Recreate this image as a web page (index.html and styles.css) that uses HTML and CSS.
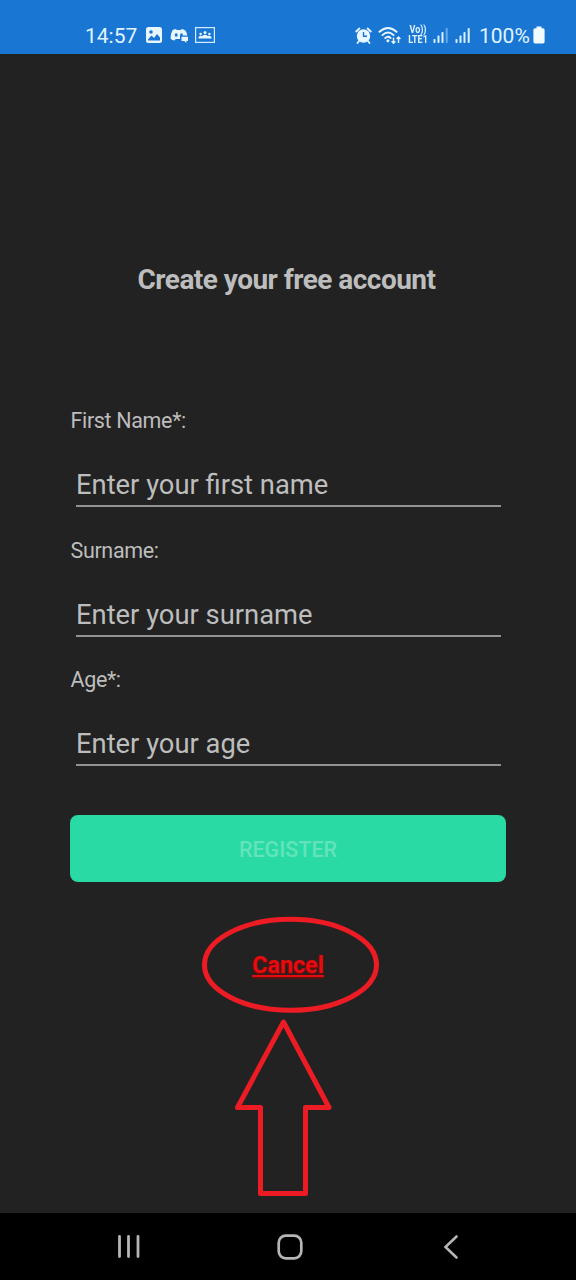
FILE: index.html
```html
<!DOCTYPE html>
<html lang="en">
<head>
<meta charset="utf-8">
<title>Create your free account</title>
<link rel="stylesheet" href="styles.css">
</head>
<body>
<div class="screen">
  <header class="status">
    <div class="status-left">
      <span class="clock">14:57</span>
      <svg class="photo" width="16" height="16" viewBox="0 0 16 16"><rect width="16" height="16" rx="2.5" fill="#e8f7ff"/><circle cx="5" cy="5" r="1.8" fill="#1976d2"/><path d="M2 12.5 5.5 8.5 8 11 11 7 14 10.5V13.5H2Z" fill="#1976d2"/></svg>
      <svg class="discord" width="19" height="16" viewBox="0 0 19 16"><path d="M6 2Q3.500 2.300 2.300 3.400Q.5 7 .5 11.500Q2 13.400 4.600 13.500L5.600 12H10V8.500H17.200Q16.900 5.500 15.400 3.400Q13.700 2.300 11.600 2L11 3H6.600Z" fill="#e8f7ff"/><ellipse cx="6.200" cy="8" rx="1.500" ry="1.700" fill="#1976d2"/><ellipse cx="11.500" cy="7.700" rx="1.400" ry="1.500" fill="#1976d2"/><path d="M11.500 9.800H18V14H16.300V16L14.300 14H11.500Z" fill="#e8f7ff"/></svg>
      <svg class="group" width="20" height="16" viewBox="0 0 20 16"><rect x=".6" y=".6" width="18.800" height="14.800" fill="none" stroke="#d3efff" stroke-width="1.200"/><g fill="#e8f7ff"><circle cx="10" cy="5.600" r="1.500"/><circle cx="5.600" cy="7" r="1.200"/><circle cx="14.400" cy="7" r="1.200"/><path d="M3.500 11.500V10Q5.500 8 7.300 9Q10 6.600 12.700 9Q14.500 8 16.500 10V11.500Z"/></g></svg>
    </div>
    <div class="status-right">
      <svg class="alarm" width="17" height="17" viewBox="0 0 17 17"><circle cx="8.500" cy="9" r="6.700" fill="#e8f7ff"/><path d="M1.200 4.500 4.400 1.500M15.800 4.500 12.600 1.500M4 14 2.500 16M13 14 14.500 16" stroke="#e8f7ff" stroke-width="1.800" stroke-linecap="round"/><path d="M8.500 5V9.300H12" fill="none" stroke="#1976d2" stroke-width="1.400"/></svg>
      <svg class="wifi" width="24" height="19" viewBox="0 0 24 19"><g fill="none" stroke="#e8f7ff" stroke-width="1.900" stroke-linecap="round"><path d="M1.500 5.800Q10 -1.800 18.500 5.800"/><path d="M4.400 9.100Q10 4 15.600 9.100"/><path d="M7.200 12.100Q10 9.600 12.600 12"/></g><circle cx="9.900" cy="14.700" r="1.500" fill="#e8f7ff"/><path d="M15.500 11.500V17M13.600 15.200 15.500 17.200 17.400 15.200M20.500 17V11M18.600 13 20.500 11 22.400 13" fill="none" stroke="#e8f7ff" stroke-width="1.400"/></svg>
      <span class="volte"><span>Vo))</span><span>LTE1</span></span>
      <svg class="signal one" width="16" height="15" viewBox="0 0 16 15"><g fill="#d8f1ff"><rect x=".5" y="11" width="2" height="4" rx=".8"/><rect x="4.500" y="7.500" width="2" height="7.500" rx=".8"/><rect x="8.500" y="4" width="2" height="11" rx=".8"/></g><rect x="12.700" y="0" width="2" height="15" rx=".8" fill="#67aaea"/></svg>
      <svg class="signal two" width="16" height="15" viewBox="0 0 16 15"><g fill="#d8f1ff"><rect x=".5" y="11" width="2" height="4" rx=".8"/><rect x="4.500" y="7.500" width="2" height="7.500" rx=".8"/><rect x="8.500" y="4" width="2" height="11" rx=".8"/><rect x="12.700" y="0" width="2" height="15" rx=".8"/></g></svg>
      <span class="percent">100%</span>
      <svg class="battery" width="12" height="18" viewBox="0 0 12 18"><path d="M3.500 .5H8.500V2.300H10Q11.600 2.300 11.600 4V15.700Q11.600 17.500 10 17.500H2Q.4 17.500 .4 15.700V4Q.4 2.300 2 2.300H3.500Z" fill="#f0fbff"/></svg>
    </div>
  </header>

  <main class="content">
    <h1 class="title"><span>Create your free account</span></h1>
    <form class="form">
      <label class="field"><span class="label">First Name*:</span><span class="entry"><span>Enter your first name</span></span></label>
      <label class="field"><span class="label">Surname:</span><span class="entry"><span>Enter your surname</span></span></label>
      <label class="field"><span class="label">Age*:</span><span class="entry"><span>Enter your age</span></span></label>
      <button class="register" type="button">REGISTER</button>
    </form>
    <a class="cancel">Cancel</a>
    <svg class="marks" width="180" height="282" viewBox="0 0 180 282" fill="none" stroke="#ed1c24" stroke-width="5" stroke-linejoin="round"><ellipse cx="90.500" cy="48.800" rx="86" ry="45.500"/><path d="M83.500 106 129 191.500H105.500V277.500H60.500V191.500H37.500Z"/></svg>
  </main>

  <nav class="nav">
    <svg width="24" height="26" viewBox="0 0 24 26"><path d="M2.500 2.500V22.500M11.500 2.500V22.500M21 2.500V22.500" stroke="#b5b5b5" stroke-width="2.800" stroke-linecap="round"/></svg>
    <svg class="home" width="26" height="26" viewBox="0 0 26 26"><rect x="1.700" y="1.700" width="22.600" height="22.600" rx="7" fill="none" stroke="#b5b5b5" stroke-width="2.700"/></svg>
    <svg width="16" height="26" viewBox="0 0 16 26"><path d="M13.500 2.500 2.500 13 13.500 23.500" fill="none" stroke="#b5b5b5" stroke-width="2.600" stroke-linecap="round"/></svg>
  </nav>
</div>
</body>
</html>
```
FILE: styles.css
```css
* { box-sizing: border-box; }
body { margin: 0; font-family: Roboto, sans-serif; }
svg { display: block; flex: none; }
.screen {
  width: 576px;
  height: 1280px;
  display: flex;
  flex-direction: column;
  background: #222;
  overflow: hidden;
}
.status {
  height: 54px;
  flex: none;
  display: flex;
  justify-content: space-between;
  padding: 16px 31px 0 85px;
  background: #1976d2;
  color: #e0f4ff;
}
.status-left, .status-right {
  height: 38px;
  display: flex;
  align-items: center;
}
.clock, .percent {
  padding-top: 1px;
  font-size: 21px;
  line-height: 26px;
  white-space: nowrap;
}
.clock { width: 52px; }
.photo { margin-left: 9px; }
.discord { margin-left: 8px; }
.group { margin-left: 6px; }
.wifi { margin-left: 6px; }
.volte {
  width: 22px;
  margin-left: 5px;
  display: flex;
  flex-direction: column;
  align-items: center;
  font-size: 10px;
  line-height: 10px;
  font-weight: 700;
  transform: scaleX(.9);
}
.signal.one { margin-left: 4px; }
.signal.two { margin-left: 6px; }
.percent { width: 51px; margin-left: 8px; }
.battery { margin-left: 3px; }
.content {
  position: relative;
  flex: 1;
  display: flex;
  flex-direction: column;
  color: #bdbdbd;
}
.title {
  margin: 209px 0 0;
  padding-right: 3px;
  font-size: 28px;
  line-height: 34px;
  font-weight: 700;
  text-align: center;
  letter-spacing: -0.53px;
}
.form {
  display: flex;
  flex-direction: column;
  margin: 110px 70px 0;
}
.field { height: 129.7px; display: flex; flex-direction: column; }
.label {
  padding-left: 0.5px;
  font-size: 21.5px;
  line-height: 28px;
  letter-spacing: -0.35px;
}
.entry {
  height: 48px;
  margin: 24.1px 5px 0 6px;
  border-bottom: 2px solid #929292;
  font-size: 27.35px;
  line-height: 52px;
}
.register {
  height: 67px;
  margin-top: 19px;
  border: 0;
  border-radius: 8px;
  padding: 0;
  background: #2adaa4;
  color: #63e3bc;
  font: 500 21.5px/69px Roboto, sans-serif;
}
.cancel {
  align-self: center;
  margin-top: 68px;
  color: #e50b0e;
  font-size: 23.3px;
  line-height: 30px;
  font-weight: 700;
  text-decoration: underline;
  text-decoration-thickness: 1.5px;
  text-underline-offset: 2px;
  text-shadow: 0 1px 2px #900;
}
.marks { position: absolute; left: 200px; top: 862px; }
.nav {
  height: 67px;
  flex: none;
  display: flex;
  align-items: center;
  justify-content: space-between;
  padding: 0 117px;
  background: #000;
}
.home { margin-right: 5px; }
```
